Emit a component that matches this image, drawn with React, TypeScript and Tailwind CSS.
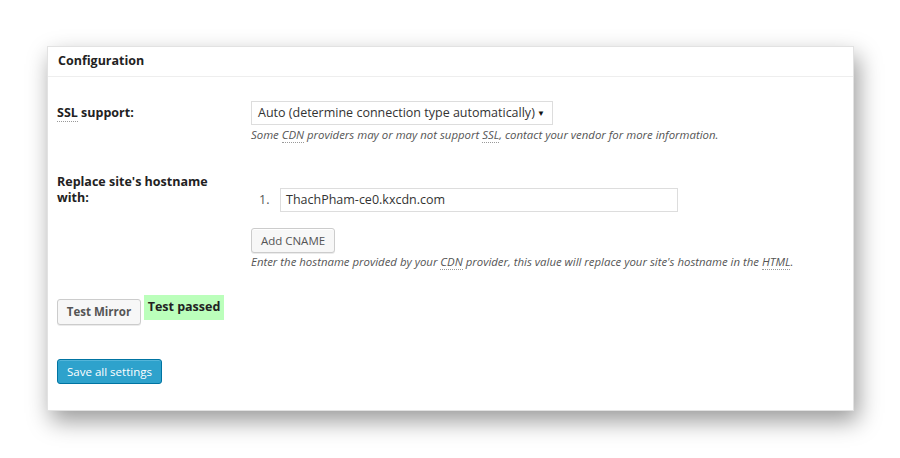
import React from 'react';

const Abbr: React.FC<{ children: React.ReactNode }> = ({ children }) => (
  <span className="border-b border-dotted border-[#999]">{children}</span>
);

const App: React.FC = () => {
  return (
    <div className="min-h-[458px] w-[900px] bg-white pl-[47px] pt-[46px] font-['Open_Sans',sans-serif] text-[#333]">
      <div className="w-[807px] h-[365px] bg-white border border-[#e2e2e2] shadow-[4px_10px_22px_rgba(0,0,0,0.4)]">
        <div className="h-[30px] border-b border-[#eeeeee] pl-[10px] flex items-center">
          <h3 className="text-[12.5px] font-bold text-[#222]">Configuration</h3>
        </div>

        <div className="pl-[9px]">
          {/* SSL support */}
          <div className="flex mt-[24px]">
            <div className="w-[194px] shrink-0 h-[24px] flex items-center text-[12.5px] font-bold text-[#222]">
              <span><Abbr>SSL</Abbr> support:</span>
            </div>
            <div>
              <div className="relative w-[302px] h-[24px] border border-[#dddddd] bg-white flex items-center pl-[6px] text-[12.5px] text-[#333]">
                Auto (determine connection type automatically)
                <span className="absolute right-[7px] top-[5px] text-[8px] text-[#111]">▼</span>
              </div>
              <p className="mt-[2px] text-[11.4px] italic text-[#555] leading-[16px]">
                Some <Abbr>CDN</Abbr> providers may or may not support <Abbr>SSL</Abbr>, contact your vendor for more information.
              </p>
            </div>
          </div>

          {/* Hostname */}
          <div className="flex mt-[31px]">
            <div className="w-[194px] shrink-0 text-[12.5px] font-bold text-[#222] leading-[16px] pr-[30px]">
              Replace site's hostname with:
            </div>
            <div className="pt-[14px]">
              <div className="flex items-center">
                <span className="w-[29px] pl-[8px] text-[12.5px] text-[#555]">1.</span>
                <div className="w-[398px] h-[24px] border border-[#dddddd] bg-white flex items-center pl-[5px] text-[12.5px] text-[#333]">
                  ThachPham-ce0.kxcdn.com
                </div>
              </div>
              <button className="mt-[16px] h-[25px] w-[84px] border border-[#cccccc] rounded-[3px] bg-[#f7f7f7] text-[11.5px] text-[#555] shadow-[inset_0_1px_0_#fff,0_1px_0_rgba(0,0,0,0.08)]">
                Add CNAME
              </button>
              <p className="mt-[1px] text-[11.4px] italic text-[#555] leading-[16px]">
                Enter the hostname provided by your <Abbr>CDN</Abbr> provider, this value will replace your site's hostname in the <Abbr>HTML</Abbr>.
              </p>
            </div>
          </div>

          {/* Test mirror */}
          <div className="flex items-start gap-[3px] mt-[25px]">
            <button className="mt-[4px] h-[26px] w-[84px] border border-[#cccccc] rounded-[3px] bg-[#f7f7f7] text-[11.5px] font-bold text-[#555] shadow-[0_1px_0_rgba(0,0,0,0.08)]">
              Test Mirror
            </button>
            <span className="h-[25px] w-[80px] justify-center bg-[#bbffbb] text-[12.5px] font-bold text-[#222] flex items-center">
              Test passed
            </span>
          </div>

          {/* Save */}
          <button className="mt-[34px] h-[25px] w-[105px] border border-[#0074a2] rounded-[3px] bg-[#2ea2cc] text-[11.5px] text-white shadow-[inset_0_1px_0_rgba(120,200,230,0.5)]">
            Save all settings
          </button>
        </div>
      </div>
    </div>
  );
};

export default App;
